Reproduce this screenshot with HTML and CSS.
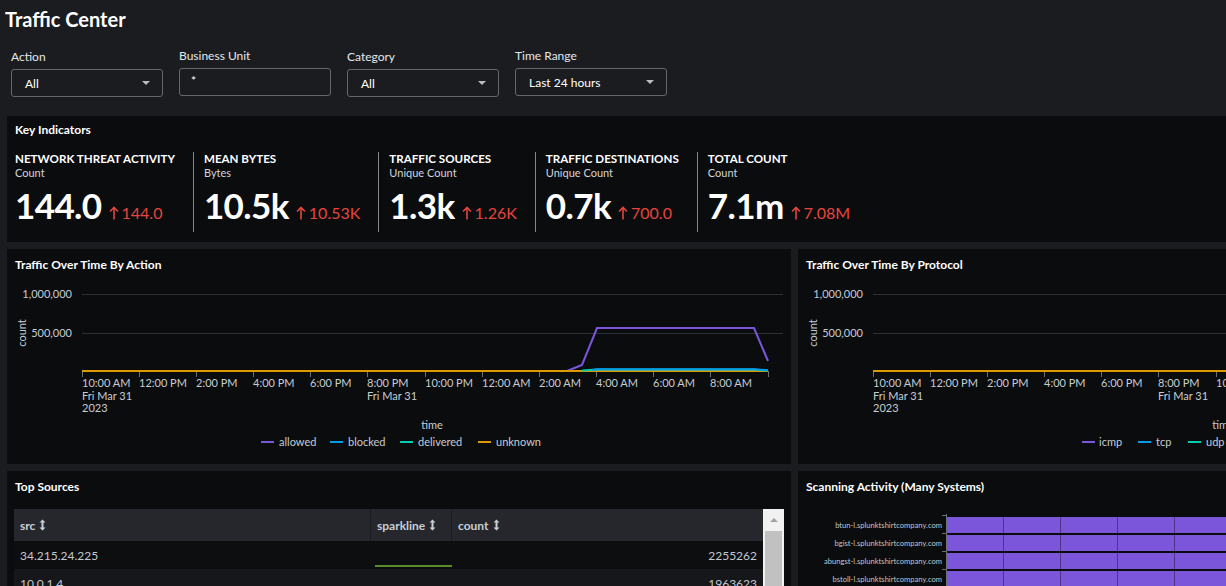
FILE: index.html
```html
<!DOCTYPE html>
<html lang="en">
<head>
<meta charset="utf-8">
<title>Traffic Center</title>
<link rel="stylesheet" href="styles.css">
</head>
<body>
<div class="page">
  <h1 class="title">Traffic Center</h1>

  <div class="filters">
    <div class="filter">
      <div class="filter-label">Action</div>
      <div class="select"><span class="select-text">All</span><span class="caret"></span></div>
    </div>
    <div class="filter filter-up">
      <div class="filter-label">Business Unit</div>
      <div class="select"><span class="select-text star">*</span></div>
    </div>
    <div class="filter">
      <div class="filter-label">Category</div>
      <div class="select"><span class="select-text">All</span><span class="caret"></span></div>
    </div>
    <div class="filter filter-up">
      <div class="filter-label">Time Range</div>
      <div class="select"><span class="select-text">Last 24 hours</span><span class="caret"></span></div>
    </div>
  </div>

  <div class="rows">
    <section class="panel kpi-panel">
      <h2 class="panel-title">Key Indicators</h2>
      <div class="metrics">
        <div class="metric">
          <div class="m-name">NETWORK THREAT ACTIVITY</div>
          <div class="m-unit">Count</div>
          <div class="m-values"><span class="m-big">144.0</span><span class="m-delta"><svg class="arrow" viewBox="0 0 10 14" width="10" height="14"><path d="M5 13.5V1.5M1 5.5L5 1.5L9 5.5"/></svg>144.0</span></div>
        </div>
        <div class="metric">
          <div class="m-name">MEAN BYTES</div>
          <div class="m-unit">Bytes</div>
          <div class="m-values"><span class="m-big">10.5k</span><span class="m-delta"><svg class="arrow" viewBox="0 0 10 14" width="10" height="14"><path d="M5 13.5V1.5M1 5.5L5 1.5L9 5.5"/></svg>10.53K</span></div>
        </div>
        <div class="metric">
          <div class="m-name">TRAFFIC SOURCES</div>
          <div class="m-unit">Unique Count</div>
          <div class="m-values"><span class="m-big">1.3k</span><span class="m-delta"><svg class="arrow" viewBox="0 0 10 14" width="10" height="14"><path d="M5 13.5V1.5M1 5.5L5 1.5L9 5.5"/></svg>1.26K</span></div>
        </div>
        <div class="metric">
          <div class="m-name">TRAFFIC DESTINATIONS</div>
          <div class="m-unit">Unique Count</div>
          <div class="m-values"><span class="m-big">0.7k</span><span class="m-delta"><svg class="arrow" viewBox="0 0 10 14" width="10" height="14"><path d="M5 13.5V1.5M1 5.5L5 1.5L9 5.5"/></svg>700.0</span></div>
        </div>
        <div class="metric">
          <div class="m-name">TOTAL COUNT</div>
          <div class="m-unit">Count</div>
          <div class="m-values"><span class="m-big">7.1m</span><span class="m-delta"><svg class="arrow" viewBox="0 0 10 14" width="10" height="14"><path d="M5 13.5V1.5M1 5.5L5 1.5L9 5.5"/></svg>7.08M</span></div>
        </div>
      </div>
    </section>

    <div class="row">
      <section class="panel chart-panel">
        <h2 class="panel-title">Traffic Over Time By Action</h2>
        <svg class="chart" viewBox="0 0 784 180" width="784" height="180">
          <g class="grid">
            <line x1="75" y1="14.5" x2="776" y2="14.5"/>
            <line x1="75" y1="53.5" x2="776" y2="53.5"/>
          </g>
          <g class="ticks">
            <line x1="75.5" y1="91" x2="75.5" y2="97"/><line x1="132.5" y1="91" x2="132.5" y2="97"/><line x1="189.5" y1="91" x2="189.5" y2="97"/><line x1="246.5" y1="91" x2="246.5" y2="97"/><line x1="303.5" y1="91" x2="303.5" y2="97"/><line x1="360.5" y1="91" x2="360.5" y2="97"/><line x1="418.5" y1="91" x2="418.5" y2="97"/><line x1="475.5" y1="91" x2="475.5" y2="97"/><line x1="532.5" y1="91" x2="532.5" y2="97"/><line x1="589.5" y1="91" x2="589.5" y2="97"/><line x1="646.5" y1="91" x2="646.5" y2="97"/><line x1="703.5" y1="91" x2="703.5" y2="97"/><line x1="761.5" y1="91" x2="761.5" y2="97"/>
          </g>
          <g class="axis-text">
            <text x="65" y="18" text-anchor="end">1,000,000</text>
            <text x="65" y="57" text-anchor="end">500,000</text>
            <text transform="translate(19,53) rotate(-90)" text-anchor="middle">count</text>
            <text x="75" y="107">10:00 AM</text><text x="75" y="120">Fri Mar 31</text><text x="75" y="132">2023</text>
            <text x="132" y="107">12:00 PM</text>
            <text x="189" y="107">2:00 PM</text>
            <text x="246" y="107">4:00 PM</text>
            <text x="303" y="107">6:00 PM</text>
            <text x="360" y="107">8:00 PM</text><text x="360" y="120">Fri Mar 31</text>
            <text x="418" y="107">10:00 PM</text>
            <text x="475" y="107">12:00 AM</text>
            <text x="532" y="107">2:00 AM</text>
            <text x="589" y="107">4:00 AM</text>
            <text x="646" y="107">6:00 AM</text>
            <text x="703" y="107">8:00 AM</text>
            <text x="425" y="149" text-anchor="middle">time</text>
          </g>
          <g class="series">
            <path class="s-purple" d="M560 91L575 85L590 48H747L761 81"/>
            <path class="s-orange" d="M75 91H761"/>
            <path class="s-teal" d="M575 90.4L590 89.6H747L761 90.6"/>
            <path class="s-blue" d="M585 90L590 89.3H747L761 90.3"/>
          </g>
          <g class="legend">
            <line class="s-purple" x1="254" y1="162" x2="267" y2="162"/><text x="272" y="166">allowed</text>
            <line class="s-blue" x1="323" y1="162" x2="336" y2="162"/><text x="341" y="166">blocked</text>
            <line class="s-teal" x1="393" y1="162" x2="406" y2="162"/><text x="411" y="166">delivered</text>
            <line class="s-orange" x1="471" y1="162" x2="484" y2="162"/><text x="489" y="166">unknown</text>
          </g>
        </svg>
      </section>

      <section class="panel chart-panel">
        <h2 class="panel-title">Traffic Over Time By Protocol</h2>
        <svg class="chart" viewBox="0 0 784 180" width="784" height="180">
          <g class="grid">
            <line x1="75" y1="14.5" x2="776" y2="14.5"/>
            <line x1="75" y1="53.5" x2="776" y2="53.5"/>
          </g>
          <g class="ticks">
            <line x1="75.5" y1="91" x2="75.5" y2="97"/><line x1="132.5" y1="91" x2="132.5" y2="97"/><line x1="189.5" y1="91" x2="189.5" y2="97"/><line x1="246.5" y1="91" x2="246.5" y2="97"/><line x1="303.5" y1="91" x2="303.5" y2="97"/><line x1="360.5" y1="91" x2="360.5" y2="97"/><line x1="418.5" y1="91" x2="418.5" y2="97"/><line x1="475.5" y1="91" x2="475.5" y2="97"/><line x1="532.5" y1="91" x2="532.5" y2="97"/><line x1="589.5" y1="91" x2="589.5" y2="97"/><line x1="646.5" y1="91" x2="646.5" y2="97"/><line x1="703.5" y1="91" x2="703.5" y2="97"/><line x1="761.5" y1="91" x2="761.5" y2="97"/>
          </g>
          <g class="axis-text">
            <text x="65" y="18" text-anchor="end">1,000,000</text>
            <text x="65" y="57" text-anchor="end">500,000</text>
            <text transform="translate(19,53) rotate(-90)" text-anchor="middle">count</text>
            <text x="75" y="107">10:00 AM</text><text x="75" y="120">Fri Mar 31</text><text x="75" y="132">2023</text>
            <text x="132" y="107">12:00 PM</text>
            <text x="189" y="107">2:00 PM</text>
            <text x="246" y="107">4:00 PM</text>
            <text x="303" y="107">6:00 PM</text>
            <text x="360" y="107">8:00 PM</text><text x="360" y="120">Fri Mar 31</text>
            <text x="418" y="107">10:00 PM</text>
            <text x="475" y="107">12:00 AM</text>
            <text x="532" y="107">2:00 AM</text>
            <text x="589" y="107">4:00 AM</text>
            <text x="646" y="107">6:00 AM</text>
            <text x="703" y="107">8:00 AM</text>
            <text x="425" y="149" text-anchor="middle">time</text>
          </g>
          <g class="series">
            <path class="s-blue" d="M560 91L575 85L590 50H747L761 82"/>
            <path class="s-orange" d="M75 91H761"/>
            <path class="s-teal" d="M575 90.4L590 89.6H747L761 90.6"/>
            <path class="s-purple" d="M585 90L590 89.3H747L761 90.3"/>
          </g>
          <g class="legend">
            <line class="s-purple" x1="284" y1="162" x2="297" y2="162"/><text x="301" y="166">icmp</text>
            <line class="s-blue" x1="340" y1="162" x2="353" y2="162"/><text x="358" y="166">tcp</text>
            <line class="s-teal" x1="390" y1="162" x2="403" y2="162"/><text x="408" y="166">udp</text>
            <line class="s-orange" x1="445" y1="162" x2="458" y2="162"/><text x="463" y="166">unknown</text>
          </g>
        </svg>
      </section>
    </div>

    <div class="row">
      <section class="panel list-panel">
        <h2 class="panel-title">Top Sources</h2>
        <div class="table-wrap">
          <div class="table">
            <div class="t-row t-head">
              <div class="t-cell c-src">src <svg class="sort" viewBox="0 0 7 12" width="7" height="12"><path d="M3.5 0.5L6.5 3.5H4.5V8.5H6.5L3.5 11.5L0.5 8.5H2.5V3.5H0.5Z"/></svg></div>
              <div class="t-cell c-spark">sparkline <svg class="sort" viewBox="0 0 7 12" width="7" height="12"><path d="M3.5 0.5L6.5 3.5H4.5V8.5H6.5L3.5 11.5L0.5 8.5H2.5V3.5H0.5Z"/></svg></div>
              <div class="t-cell c-count">count <svg class="sort" viewBox="0 0 7 12" width="7" height="12"><path d="M3.5 0.5L6.5 3.5H4.5V8.5H6.5L3.5 11.5L0.5 8.5H2.5V3.5H0.5Z"/></svg></div>
            </div>
            <div class="t-row t-odd">
              <div class="t-cell c-src">34.215.24.225</div>
              <div class="t-cell c-spark"><span class="sparkline"></span></div>
              <div class="t-cell c-count num">2255262</div>
            </div>
            <div class="t-row t-even">
              <div class="t-cell c-src">10.0.1.4</div>
              <div class="t-cell c-spark"><span class="sparkline"></span></div>
              <div class="t-cell c-count num">1963623</div>
            </div>
          </div>
          <div class="scrollbar">
            <div class="sb-up"><span class="sb-arrow"></span></div>
            <div class="sb-thumb"></div>
          </div>
        </div>
      </section>

      <section class="panel list-panel">
        <h2 class="panel-title">Scanning Activity (Many Systems)</h2>
        <svg class="bars" viewBox="0 0 784 120" width="784" height="120">
          <g class="bar-fill">
            <rect x="149" y="8" width="635" height="16"/>
            <rect x="149" y="26" width="635" height="16"/>
            <rect x="149" y="44" width="635" height="16"/>
            <rect x="149" y="62" width="635" height="16"/>
            <rect x="149" y="80" width="635" height="16"/>
          </g>
          <g class="bar-grid">
            <line x1="205.5" y1="8" x2="205.5" y2="100"/><line x1="262.5" y1="8" x2="262.5" y2="100"/><line x1="319.5" y1="8" x2="319.5" y2="100"/><line x1="376.5" y1="8" x2="376.5" y2="100"/><line x1="433.5" y1="8" x2="433.5" y2="100"/><line x1="490.5" y1="8" x2="490.5" y2="100"/><line x1="547.5" y1="8" x2="547.5" y2="100"/><line x1="604.5" y1="8" x2="604.5" y2="100"/><line x1="661.5" y1="8" x2="661.5" y2="100"/><line x1="718.5" y1="8" x2="718.5" y2="100"/>
          </g>
          <g class="bar-axis">
            <line x1="148.5" y1="5" x2="148.5" y2="110"/>
            <line x1="144" y1="6.5" x2="148" y2="6.5"/><line x1="144" y1="24.5" x2="148" y2="24.5"/><line x1="144" y1="42.5" x2="148" y2="42.5"/><line x1="144" y1="60.5" x2="148" y2="60.5"/><line x1="144" y1="78.5" x2="148" y2="78.5"/>
          </g>
          <g class="bar-labels">
            <text x="144" y="19" text-anchor="end">btun-l.splunktshirtcompany.com</text>
            <text x="144" y="37" text-anchor="end">bgist-l.splunktshirtcompany.com</text>
            <text x="144" y="55" text-anchor="end">abungst-l.splunktshirtcompany.com</text>
            <text x="144" y="73" text-anchor="end">bstoll-l.splunktshirtcompany.com</text>
            <text x="144" y="91" text-anchor="end">jdoe-l.splunktshirtcompany.com</text>
          </g>
        </svg>
      </section>
    </div>
  </div>
</div>
</body>
</html>
```

FILE: styles.css
```css
* { box-sizing: border-box; }

html, body {
  margin: 0;
  padding: 0;
  background: #1b1c20;
  overflow: hidden;
}

body {
  font-family: Lato, "Open Sans", "Liberation Sans", sans-serif;
  color: #ffffff;
  width: 1226px;
  height: 586px;
}

.page {
  width: 1600px;
}

.title {
  margin: 7px 0 0 5px;
  font-size: 20px;
  line-height: 24px;
  font-weight: 700;
  color: #ffffff;
}

.filters {
  display: flex;
  gap: 16px;
  margin: 19px 0 0 11px;
}

.filter {
  width: 152px;
}

.filter-up {
  margin-top: -1px;
}

.filter-label {
  font-size: 12px;
  line-height: 14px;
  color: #e4e7ec;
  margin-bottom: 5px;
}

.select {
  height: 28px;
  border: 1px solid #64676e;
  border-radius: 3px;
  display: flex;
  align-items: center;
  justify-content: space-between;
  padding: 0 12px 0 13px;
  background: #1b1c20;
}

.select-text {
  font-size: 12px;
  color: #ffffff;
}

.star {
  margin-left: -2px;
  margin-top: -4px;
}

.caret {
  width: 0;
  height: 0;
  border-left: 4px solid transparent;
  border-right: 4px solid transparent;
  border-top: 4px solid #b9bcc2;
}

.rows {
  display: flex;
  flex-direction: column;
  gap: 7px;
  margin-top: 19px;
  padding-left: 7px;
}

.row {
  display: grid;
  grid-template-columns: 784px 784px;
  gap: 7px;
}

.panel {
  background: #0b0c0e;
}

.panel-title {
  margin: 0;
  font-size: 12px;
  line-height: 14px;
  font-weight: 700;
  color: #ffffff;
}

/* Key indicators */
.kpi-panel {
  width: 1575px;
  height: 126px;
  padding: 7px 8px 0 8px;
}

.metrics {
  display: flex;
  margin-top: 15px;
}

.metric {
  height: 80px;
  padding: 0 18px 0 10px;
  border-left: 1px solid #85888e;
}

.metric:first-child {
  padding-left: 0;
  border-left: none;
}

.m-name {
  font-size: 11.6px;
  line-height: 14px;
  font-weight: 700;
  color: #ffffff;
  white-space: nowrap;
}

.m-unit {
  font-size: 11px;
  line-height: 13px;
  color: #d0d5dc;
}

.m-values {
  display: flex;
  align-items: baseline;
  height: 52px;
  padding-top: 6px;
  white-space: nowrap;
}

.m-big {
  font-size: 35px;
  line-height: 40px;
  font-weight: 700;
  letter-spacing: -0.6px;
  color: #ffffff;
}

.m-delta {
  margin-left: 7px;
  font-size: 16px;
  color: #e5453d;
  display: inline-flex;
  align-items: baseline;
}

.arrow {
  fill: none;
  stroke: #e5453d;
  stroke-width: 1.6;
  margin-right: 3px;
  position: relative;
  top: 1px;
}

/* Charts */
.chart-panel {
  height: 215px;
  padding-top: 9px;
}

.chart-panel .panel-title {
  padding-left: 8px;
}

.chart {
  display: block;
  margin-top: 8px;
}

.grid line {
  stroke: #2e3035;
  stroke-width: 1;
}

.ticks line {
  stroke: #6b6e75;
  stroke-width: 1;
}

.axis-text text,
.legend text {
  font-family: Lato, "Open Sans", "Liberation Sans", sans-serif;
  font-size: 11px;
  fill: #c6ccd4;
}

.series path,
.legend line {
  fill: none;
  stroke-width: 2;
}

.s-purple { stroke: #7b56db; }
.s-blue { stroke: #009ceb; }
.s-teal { stroke: #00cdaf; }
.s-orange { stroke: #dd9900; }

/* Bottom row */
.list-panel {
  height: 140px;
  padding: 9px 7px 0 7px;
  overflow: hidden;
}

.list-panel .panel-title {
  padding-left: 1px;
}

.table-wrap {
  display: flex;
  margin-top: 15px;
}

.table {
  width: 749px;
}

.t-row {
  display: flex;
  height: 28px;
  align-items: center;
}

.t-head {
  height: 32px;
  background: #25272c;
}

.t-odd { background: #0d0e10; }
.t-even { background: #16171a; }

.t-cell {
  height: 100%;
  display: flex;
  align-items: center;
  font-size: 12px;
  color: #c3c9d1;
  padding: 0 6px;
  white-space: nowrap;
}

.t-head .t-cell {
  font-weight: 700;
  color: #c8ced6;
  border-right: 1px solid #1b1c20;
}

.t-head .t-cell:last-child {
  border-right: none;
}

.c-src { width: 357px; }
.c-spark { width: 81px; padding: 0; position: relative; }
.t-head .c-spark { padding-left: 6px; }
.c-count { flex: 1; }
.num { justify-content: flex-end; }

.sort {
  fill: #c8ced6;
  margin-left: 4px;
}

.sparkline {
  position: absolute;
  left: 4px;
  right: 0;
  bottom: 2px;
  height: 2px;
  background: #5b8a2c;
}

.t-even .sparkline {
  display: none;
}

.scrollbar {
  width: 21px;
  height: 120px;
  background: #f1f1f1;
  display: flex;
  flex-direction: column;
  align-items: center;
  padding: 0 2px;
}

.sb-up {
  height: 22px;
  width: 100%;
  display: flex;
  align-items: center;
  justify-content: center;
}

.sb-arrow {
  width: 0;
  height: 0;
  border-left: 4px solid transparent;
  border-right: 4px solid transparent;
  border-bottom: 4px solid #a3a3a3;
}

.sb-thumb {
  width: 100%;
  flex: 1;
  background: #c1c1c1;
}

.bars {
  display: block;
  margin-top: 15px;
  margin-left: -7px;
}

.bar-fill rect {
  fill: #7b56db;
}

.bar-grid line {
  stroke: rgba(20, 14, 40, 0.45);
  stroke-width: 1;
}

.bar-axis line {
  stroke: #6b6e75;
  stroke-width: 1;
}

.bar-labels text {
  font-family: Lato, "Open Sans", "Liberation Sans", sans-serif;
  font-size: 7.6px;
  fill: #bfc5cd;
}
```
